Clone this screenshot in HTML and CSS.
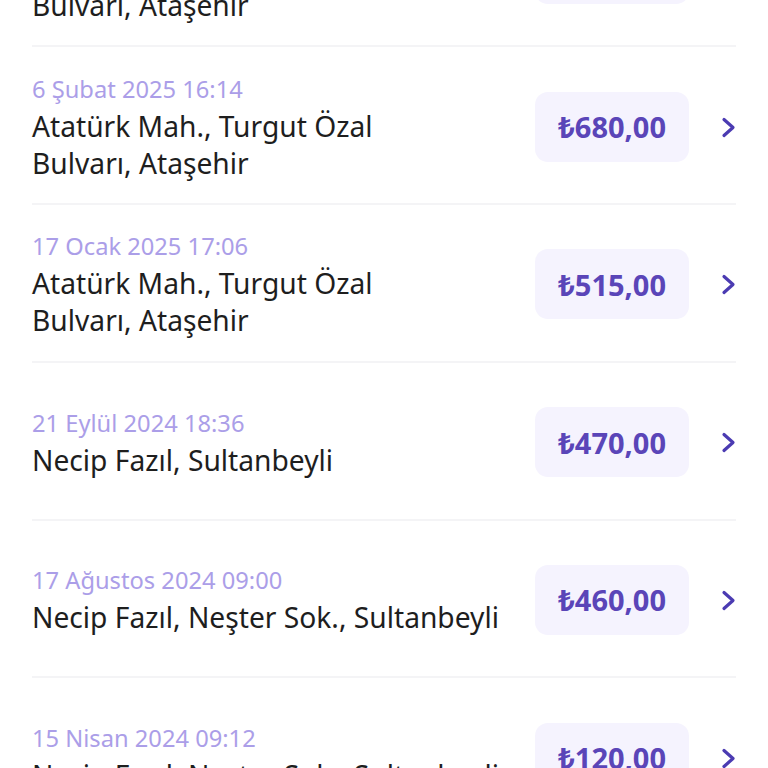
FILE: index.html
```html
<!DOCTYPE html>
<html lang="tr">
<head>
<meta charset="utf-8">
<title>Geçmiş</title>
<link rel="stylesheet" href="styles.css">
</head>
<body>
<main class="list">
  <div class="row">
    <div class="info">
      <div class="date">28 Şubat 2025 10:20</div>
      <div class="addr">Atatürk Mah., Turgut Özal<br>Bulvarı, Ataşehir</div>
    </div>
    <div class="price">₺540,00</div>
    <svg class="chev" viewBox="0 0 15 21"><path d="M3 2.5 L12 10.5 L3 18.5"/></svg>
  </div>
  <div class="row">
    <div class="info">
      <div class="date">6 Şubat 2025 16:14</div>
      <div class="addr">Atatürk Mah., Turgut Özal<br>Bulvarı, Ataşehir</div>
    </div>
    <div class="price">₺680,00</div>
    <svg class="chev" viewBox="0 0 15 21"><path d="M3 2.5 L12 10.5 L3 18.5"/></svg>
  </div>
  <div class="row">
    <div class="info">
      <div class="date">17 Ocak 2025 17:06</div>
      <div class="addr">Atatürk Mah., Turgut Özal<br>Bulvarı, Ataşehir</div>
    </div>
    <div class="price">₺515,00</div>
    <svg class="chev" viewBox="0 0 15 21"><path d="M3 2.5 L12 10.5 L3 18.5"/></svg>
  </div>
  <div class="row">
    <div class="info">
      <div class="date">21 Eylül 2024 18:36</div>
      <div class="addr">Necip Fazıl, Sultanbeyli</div>
    </div>
    <div class="price">₺470,00</div>
    <svg class="chev" viewBox="0 0 15 21"><path d="M3 2.5 L12 10.5 L3 18.5"/></svg>
  </div>
  <div class="row">
    <div class="info">
      <div class="date">17 Ağustos 2024 09:00</div>
      <div class="addr">Necip Fazıl, Neşter Sok., Sultanbeyli</div>
    </div>
    <div class="price">₺460,00</div>
    <svg class="chev" viewBox="0 0 15 21"><path d="M3 2.5 L12 10.5 L3 18.5"/></svg>
  </div>
  <div class="row">
    <div class="info">
      <div class="date">15 Nisan 2024 09:12</div>
      <div class="addr">Necip Fazıl, Neşter Sok., Sultanbeyli</div>
    </div>
    <div class="price">₺120,00</div>
    <svg class="chev" viewBox="0 0 15 21"><path d="M3 2.5 L12 10.5 L3 18.5"/></svg>
  </div>
</main>
</body>
</html>
```

FILE: styles.css
```css
html, body {
  margin: 0;
  padding: 0;
  background: #ffffff;
  overflow: hidden;
}

body {
  font-family: "Noto Sans", "Open Sans", sans-serif;
}

.list {
  margin-top: -110.5px;
  padding: 0 32px;
}

.row {
  display: flex;
  align-items: center;
  height: 157.75px;
  box-sizing: border-box;
  border-bottom: 2px solid #f4f4f6;
}

.info {
  flex: 1;
  min-width: 0;
  padding-top: 2px;
}

.date {
  font-size: 23.7px;
  line-height: 37px;
  color: #ab9ee8;
}

.addr {
  font-size: 28.2px;
  line-height: 37px;
  color: #1e1e1e;
}

.price {
  height: 70px;
  margin-top: 3px;
  padding: 0 23px;
  display: flex;
  align-items: center;
  background: #f5f3fe;
  border-radius: 13px;
  font-size: 29px;
  font-weight: 700;
  color: #5a45b8;
}

.chev {
  width: 15px;
  height: 21px;
  margin-top: 4px;
  margin-left: 32px;
  fill: none;
  stroke: #4b3bb2;
  stroke-width: 3.2;
  stroke-linecap: round;
  stroke-linejoin: round;
}
```
